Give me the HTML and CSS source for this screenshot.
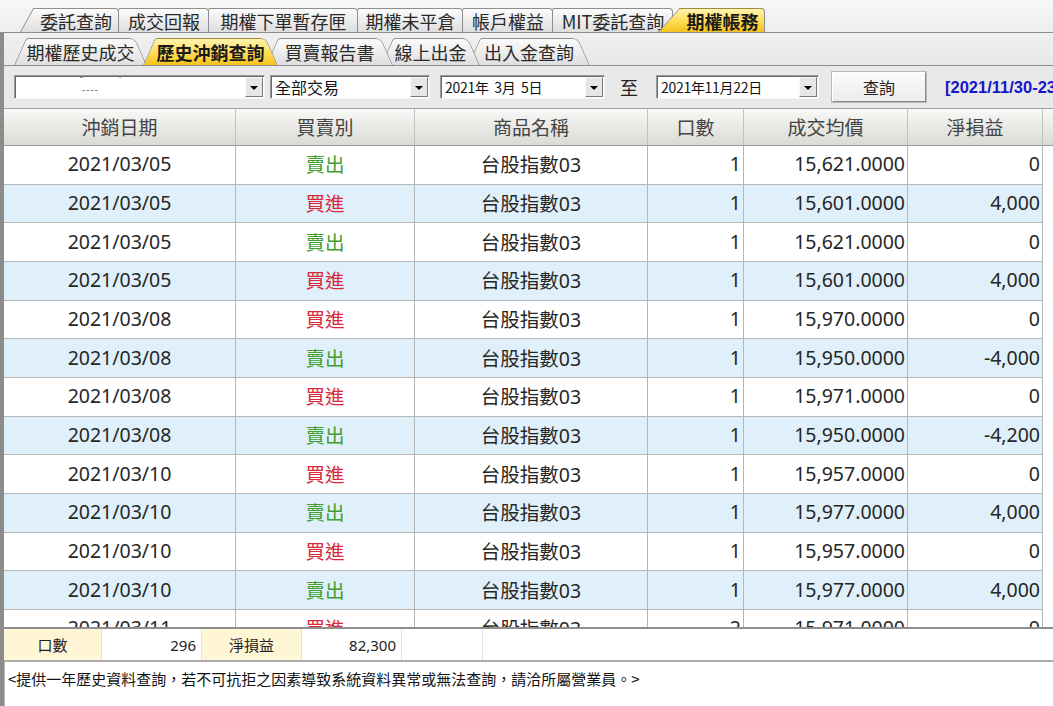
FILE: index.html
```html
<!DOCTYPE html>
<html>
  <head>
    <meta charset="utf8">
    <title>歷史沖銷查詢</title>
    <link rel="stylesheet" href="styles.css">
  </head>
  <body>

    <div class="tabs top">
      <div class="tab tab-a">委託查詢</div>
      <div class="tab tab-b">成交回報</div>
      <div class="tab tab-c">期權下單暫存匣</div>
      <div class="tab tab-d">期權未平倉</div>
      <div class="tab tab-e">帳戶權益</div>
      <div class="tab tab-f">MIT委託查詢</div>
      <div class="tab tab-g active">期權帳務</div>
    </div>

    <div class="pane">

      <div class="tabs sub">
        <div class="tab tab-a">期權歷史成交</div>
        <div class="tab tab-b active">歷史沖銷查詢</div>
        <div class="tab tab-c">買賣報告書</div>
        <div class="tab tab-d">線上出金</div>
        <div class="tab tab-e">出入金查詢</div>
      </div>

      <div class="toolbar">
        <div class="combo combo-account">
          <span class="masked"><span class="dots">¨&nbsp;&nbsp;&nbsp;&nbsp;&nbsp;&nbsp;&nbsp;&nbsp;&nbsp;&nbsp;&nbsp;&nbsp;˙</span><span class="dashes">-‐--</span></span>
          <span class="drop"></span>
        </div>
        <div class="combo combo-type">
          <span class="value">全部交易</span>
          <span class="drop"></span>
        </div>
        <div class="combo combo-date from">
          <span class="value">2021年&nbsp;&nbsp;3月&nbsp;&nbsp;5日</span>
          <span class="drop"></span>
        </div>
        <span class="to">至</span>
        <div class="combo combo-date until">
          <span class="value">2021年11月22日</span>
          <span class="drop"></span>
        </div>
        <button class="query" type="button">查詢</button>
        <span class="stamp">[2021/11/30-23:59:59]</span>
      </div>

      <div class="grid">
        <div class="grid-head">
          <div>沖銷日期</div>
          <div>買賣別</div>
          <div>商品名稱</div>
          <div>口數</div>
          <div>成交均價</div>
          <div>淨損益</div>
          <div class="filler"></div>
        </div>

        <div class="grid-body">
          <div class="row"><div>2021/03/05</div><div class="sell">賣出</div><div>台股指數03</div><div class="num">1</div><div class="num">15,621.0000</div><div class="num">0</div></div>
          <div class="row alt"><div>2021/03/05</div><div class="buy">買進</div><div>台股指數03</div><div class="num">1</div><div class="num">15,601.0000</div><div class="num">4,000</div></div>
          <div class="row"><div>2021/03/05</div><div class="sell">賣出</div><div>台股指數03</div><div class="num">1</div><div class="num">15,621.0000</div><div class="num">0</div></div>
          <div class="row alt"><div>2021/03/05</div><div class="buy">買進</div><div>台股指數03</div><div class="num">1</div><div class="num">15,601.0000</div><div class="num">4,000</div></div>
          <div class="row"><div>2021/03/08</div><div class="buy">買進</div><div>台股指數03</div><div class="num">1</div><div class="num">15,970.0000</div><div class="num">0</div></div>
          <div class="row alt"><div>2021/03/08</div><div class="sell">賣出</div><div>台股指數03</div><div class="num">1</div><div class="num">15,950.0000</div><div class="num">-4,000</div></div>
          <div class="row"><div>2021/03/08</div><div class="buy">買進</div><div>台股指數03</div><div class="num">1</div><div class="num">15,971.0000</div><div class="num">0</div></div>
          <div class="row alt"><div>2021/03/08</div><div class="sell">賣出</div><div>台股指數03</div><div class="num">1</div><div class="num">15,950.0000</div><div class="num">-4,200</div></div>
          <div class="row"><div>2021/03/10</div><div class="buy">買進</div><div>台股指數03</div><div class="num">1</div><div class="num">15,957.0000</div><div class="num">0</div></div>
          <div class="row alt"><div>2021/03/10</div><div class="sell">賣出</div><div>台股指數03</div><div class="num">1</div><div class="num">15,977.0000</div><div class="num">4,000</div></div>
          <div class="row"><div>2021/03/10</div><div class="buy">買進</div><div>台股指數03</div><div class="num">1</div><div class="num">15,957.0000</div><div class="num">0</div></div>
          <div class="row alt"><div>2021/03/10</div><div class="sell">賣出</div><div>台股指數03</div><div class="num">1</div><div class="num">15,977.0000</div><div class="num">4,000</div></div>
          <div class="row"><div>2021/03/11</div><div class="buy">買進</div><div>台股指數03</div><div class="num">2</div><div class="num">15,971.0000</div><div class="num">0</div></div>
        </div>
      </div>

      <div class="summary">
        <div class="label">口數</div>
        <div class="value">296</div>
        <div class="label">淨損益</div>
        <div class="value">82,300</div>
        <div class="blank"></div>
        <div class="rest"></div>
      </div>

      <div class="notice">
        <p>&lt;提供一年歷史資料查詢，若不可抗拒之因素導致系統資料異常或無法查詢，請洽所屬營業員。&gt;</p>
      </div>

    </div>
  </body>
</html>
```

FILE: styles.css
```css
html, body {
  margin: 0;
  width: 1053px;
  height: 706px;
  overflow: hidden;
  background: #ececec;
  font-family: "Noto Sans CJK TC", "Noto Sans", sans-serif;
}

/* tab strips */

.tabs {
  display: flex;
  align-items: flex-end;
  box-sizing: border-box;
  border-bottom: 1px solid #8e8e8e;
}

.tab {
  position: relative;
  box-sizing: border-box;
  flex-shrink: 0;
  display: flex;
  align-items: center;
  justify-content: center;
  font-size: 18px;
  color: #2a2a2a;
  white-space: nowrap;
}

.tab::before,
.tab::after {
  content: "";
  position: absolute;
  top: 0;
  bottom: 0;
  z-index: -1;
  box-sizing: border-box;
  background: linear-gradient(#fbfbfb, #ececec 55%, #dedede);
  border-top: 1px solid #8e8e8e;
}

.tab.active {
  font-weight: bold;
  color: #1a1a1a;
}

.tab.active::before,
.tab.active::after {
  background: linear-gradient(#fff4b0, #ffde5a 50%, #f5c21c);
  border-color: #a08a40;
}

/* upper strip: slanted left edge, straight right edge */

.tabs.top {
  height: 33px;
  padding-left: 20px;
  background: linear-gradient(#f7f7f7, #ededed);
}

.top .tab {
  height: 24px;
  padding-left: 13px;
  margin-left: -13px;
  padding-top: 1px;
}

.top .tab:first-child {
  margin-left: 0;
}

.top .tab::before {
  left: 0;
  width: 50%;
  border-left: 1px solid #8e8e8e;
  transform: skewX(-29deg);
  transform-origin: bottom left;
}

.top .tab::after {
  right: 0;
  width: 60%;
  border-right: 1px solid #8e8e8e;
  border-top-right-radius: 4px;
}

.top .tab-a { width: 99px; z-index: 7; }
.top .tab-b { width: 103px; z-index: 6; }
.top .tab-c { width: 162px; z-index: 5; }
.top .tab-d { width: 118px; z-index: 4; }
.top .tab-e { width: 103px; z-index: 3; }
.top .tab-f { width: 133px; z-index: 2; }

.top .tab-g {
  width: 107px;
  z-index: 10;
  margin-left: -15px;
  padding-left: 22px;
}

.top .tab-g::before {
  transform: skewX(-42deg);
}

/* lower strip: both edges slanted */

.pane {
  border-left: 4px solid #8c8c8c;
}

.tabs.sub {
  height: 33px;
  padding-left: 10px;
  background: linear-gradient(#f0f0f0, #e8e8e8);
}

.sub .tab {
  height: 27px;
  padding: 1px 12px 0;
  margin-left: -12px;
}

.sub .tab:first-child {
  margin-left: 0;
}

.sub .tab::before {
  left: 0;
  width: 55%;
  border-left: 1px solid #8e8e8e;
  border-top-left-radius: 3px;
  transform: skewX(-24deg);
  transform-origin: bottom left;
}

.sub .tab::after {
  right: 0;
  width: 55%;
  border-right: 1px solid #8e8e8e;
  border-top-right-radius: 6px;
  transform: skewX(24deg);
  transform-origin: bottom right;
}

.sub .tab-a { width: 133px; z-index: 6; }
.sub .tab-b { width: 135px; z-index: 10; margin-left: -4px; }
.sub .tab-c { width: 127px; z-index: 5; }
.sub .tab-d { width: 99px; z-index: 4; }
.sub .tab-e { width: 122px; z-index: 3; }

/* query bar */

.toolbar {
  display: flex;
  align-items: center;
  height: 42px;
  padding-left: 10px;
  background: #e9e9e9;
  border-bottom: 1px solid #a0a0a0;
  white-space: nowrap;
  overflow: hidden;
}

.toolbar > * {
  flex-shrink: 0;
}

.combo {
  position: relative;
  box-sizing: border-box;
  display: flex;
  align-items: center;
  height: 24px;
  background: #ffffff;
  border: 1px solid;
  border-color: #9a9a9a #f4f4f4 #f4f4f4 #9a9a9a;
  box-shadow: inset 1px 1px 0 #6a6a6a;
  padding-left: 4px;
}

.combo .value {
  flex: 1;
  color: #111;
}

.combo .drop {
  box-sizing: border-box;
  width: 18px;
  height: 20px;
  margin-right: 1px;
  background: #e6e6e6;
  border: 1px solid;
  border-color: #fafafa #7a7a7a #7a7a7a #fafafa;
  display: flex;
  align-items: center;
  justify-content: center;
}

.combo .drop::after {
  content: "";
  border-left: 4px solid transparent;
  border-right: 4px solid transparent;
  border-top: 4px solid #000;
  margin-top: 1px;
}

.combo-account {
  width: 251px;
}

.masked {
  flex: 1;
  position: relative;
  height: 100%;
  color: #555;
  font-size: 9px;
  font-family: "DejaVu Sans", sans-serif;
}

.masked .dots {
  position: absolute;
  left: 60px;
  top: 0;
}

.masked .dashes {
  position: absolute;
  left: 63px;
  top: 9px;
  letter-spacing: 1px;
}

.combo-type {
  width: 160px;
  margin-left: 5px;
  font-size: 16px;
}

.combo-date {
  font-size: 14px;
  letter-spacing: -0.3px;
}

.combo-date.from {
  width: 165px;
  margin-left: 10px;
}

.combo-date.until {
  width: 163px;
  margin-left: 18px;
}

.to {
  margin-left: 15px;
  font-size: 18px;
  color: #222;
}

.query {
  box-sizing: border-box;
  width: 94px;
  height: 30px;
  margin-left: 13px;
  background: linear-gradient(#fbfbfb, #ececec);
  border: 1px solid;
  border-color: #ffffff #8a8a8a #8a8a8a #ffffff;
  box-shadow: 0 0 0 1px #b8b8b8;
  font-family: "Noto Sans CJK TC", sans-serif;
  font-size: 16px;
  color: #222;
  padding: 0;
}

.stamp {
  margin-left: 19px;
  font-family: "Liberation Sans", sans-serif;
  font-weight: bold;
  font-size: 16.5px;
  color: #1616c8;
}

/* grid */

.grid {
  font-family: "Noto Sans", "Noto Sans CJK TC", sans-serif;
  font-size: 19.5px;
  color: #262626;
}

.grid-head,
.row {
  display: grid;
  grid-template-columns: 232px 179px 233px 96px 164px 135px 1fr;
}

.grid-head {
  height: 37px;
  background: linear-gradient(#f8f8f6, #e9e9e6 50%, #dadad6);
  border-bottom: 1px solid #9c9c9c;
  box-sizing: border-box;
  color: #444;
}

.grid-head div {
  display: flex;
  align-items: center;
  justify-content: center;
  border-right: 1px solid #c2c2c2;
  font-family: "Noto Sans CJK TC", sans-serif;
  font-size: 19px;
  padding-bottom: 2px;
}

.grid-head .filler {
  border-right: none;
}

.grid-body {
  height: 481px;
  overflow: hidden;
  background: #ffffff;
}

.row {
  height: 38.67px;
  grid-template-columns: 232px 179px 233px 96px 164px 135px;
}

.row div {
  box-sizing: border-box;
  display: flex;
  align-items: center;
  justify-content: center;
  border-right: 1px solid #b6b6b6;
  border-bottom: 1px solid #b6b6b6;
  background: #ffffff;
  padding-bottom: 2px;
}

.row.alt div {
  background: #dff0fa;
}

.row div.num {
  justify-content: flex-end;
  padding-right: 2px;
}

.row div.sell {
  color: #3f9f32;
  font-family: "Noto Sans CJK TC", sans-serif;
}

.row div.buy {
  color: #d8283c;
  font-family: "Noto Sans CJK TC", sans-serif;
}

/* totals */

.summary {
  display: grid;
  grid-template-columns: 98px 100px 100px 100px 81px 1fr;
  height: 34px;
  box-sizing: border-box;
  border-top: 2px solid #8e8e8e;
  border-bottom: 1px solid #b0b0b0;
  background: #ffffff;
  font-family: "Noto Sans", "Noto Sans CJK TC", sans-serif;
  font-size: 15px;
  color: #222;
}

.summary div {
  display: flex;
  align-items: center;
  border-right: 1px solid #e2e2e2;
}

.summary .label {
  justify-content: center;
  background: #fff6d6;
  font-family: "Noto Sans CJK TC", sans-serif;
}

.summary .value {
  justify-content: flex-end;
  padding-right: 5px;
}

.summary .rest {
  border-right: none;
}

.notice {
  height: 45px;
  background: #ffffff;
  border-top: 1px solid #a8a8a8;
  border-left: 1px solid #b8b8b8;
}

.notice p {
  margin: 0;
  padding: 6px 0 0 3px;
  font-size: 15px;
  color: #111;
  white-space: nowrap;
}
```
